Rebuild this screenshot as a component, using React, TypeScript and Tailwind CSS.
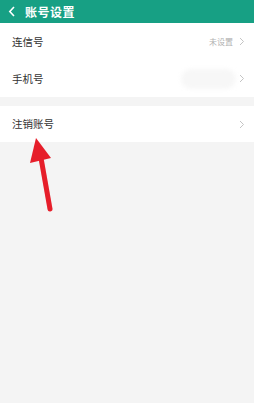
import React from "react";

const Chevron = () => (
  <svg width="6" height="9" viewBox="0 0 6 9" className="ml-[6px]">
    <path d="M1 1 L4.5 4.5 L1 8" fill="none" stroke="#c4c4c4" strokeWidth="1" />
  </svg>
);

export default function App() {
  return (
    <div
      className="w-[254px] h-[403px] bg-[#f4f4f4] relative overflow-hidden"
      style={{ fontFamily: '"Noto Sans CJK SC", "Noto Sans", sans-serif' }}
    >
      <div className="h-[23px] bg-[#17a084] flex items-center pl-[8px]">
        <svg width="8" height="11" viewBox="0 0 8 11">
          <path d="M6 1 L1.8 5.5 L6 10" fill="none" stroke="#ffffff" strokeWidth="1.6" />
        </svg>
        <span className="ml-[9px] text-white text-[12px] font-semibold leading-none tracking-[0.5px]">账号设置</span>
      </div>
      <div className="bg-white">
        <div className="h-[37px] flex items-center pl-[12px] pr-[9px]">
          <span className="text-[10.5px] text-[#333] flex-1">连信号</span>
          <span className="text-[8px] text-[#b0b0b0]">未设置</span>
          <Chevron />
        </div>
        <div className="h-[37px] flex items-center pl-[12px] pr-[9px]">
          <span className="text-[10.5px] text-[#333] flex-1">手机号</span>
          <div className="w-[55px] h-[20px] rounded-[10px] bg-[#f7f7f7] blur-[2px] mr-[-3px]" />
          <Chevron />
        </div>
      </div>
      <div className="h-[9px]" />
      <div className="bg-white">
        <div className="h-[36px] flex items-center pl-[12px] pr-[9px]">
          <span className="text-[10.5px] text-[#333] flex-1">注销账号</span>
          <Chevron />
        </div>
      </div>
      <svg className="absolute left-0 top-0" width="254" height="403" viewBox="0 0 254 403">
        <line x1="50" y1="209" x2="41" y2="158" stroke="#e61e2a" strokeWidth="5" strokeLinecap="round" />
        <polygon points="36,138 30,163 51,158" fill="#e61e2a" />
      </svg>
    </div>
  );
}
